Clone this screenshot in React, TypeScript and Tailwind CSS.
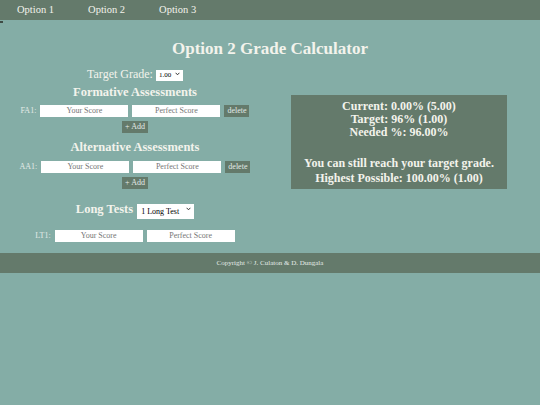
const serif = "font-['Liberation_Serif','Times_New_Roman',serif]";

function ScoreRow({ label, del }: { label: string; del?: boolean }) {
  return (
    <div className="flex h-[12px] items-center justify-center gap-[4px]">
      <span className="text-[8px] text-[#e3ebe7]">{label}</span>
      <input
        placeholder="Your Score"
        className="h-[12px] w-[88px] bg-white text-center text-[8px] text-black placeholder:text-[#757575] outline-none"
      />
      <input
        placeholder="Perfect Score"
        className="h-[12px] w-[88px] bg-white text-center text-[8px] text-black placeholder:text-[#757575] outline-none"
      />
      {del && (
        <button className="h-[12px] bg-[#647a6b] px-[3px] text-[8px] leading-[12px] text-[#e3ebe7]">
          delete
        </button>
      )}
    </div>
  );
}

function AddButton() {
  return (
    <div className="flex justify-center">
      <button className="h-[12px] bg-[#647a6b] px-[3px] text-[8px] leading-[12px] text-[#e3ebe7]">
        + Add
      </button>
    </div>
  );
}

function Chevron() {
  return (
    <svg width="5" height="4" viewBox="0 0 5 4" className="pointer-events-none absolute right-[3px] top-1/2 -translate-y-1/2">
      <path d="M0.6 0.8 L2.5 2.8 L4.4 0.8" fill="none" stroke="#222" strokeWidth="0.9" />
    </svg>
  );
}

export default function App() {
  return (
    <div className={`${serif} min-h-[405px] w-[540px] bg-[#84ada6] text-[#f3f3ec]`}>
      <nav className="flex h-[20px] items-center bg-[#647a6b] pl-[17px] text-[10.5px]">
        <span>Option 1</span>
        <span className="ml-[34px]">Option 2</span>
        <span className="ml-[34px]">Option 3</span>
      </nav>
      <div className="h-[3px]">
        <div className="mt-[1px] h-[2px] w-[3px] bg-[#3e4b44]" />
      </div>

      <h1 className="mt-[15px] text-center text-[17px] leading-[20px] font-bold">
        Option 2 Grade Calculator
      </h1>

      <div className="flex">
        <div className="w-[270px]">
          <div className="mt-[7px] flex items-center justify-center gap-[3px] text-[12px] leading-[14px]">
            <span>Target Grade:</span>
            <div className="relative">
              <select className="h-[11px] w-[27px] appearance-none bg-white pl-[3px] text-[7px] leading-[11px] text-black">
                <option>1.00</option>
              </select>
              <Chevron />
            </div>
          </div>

          <h2 className="mt-[4px] text-center text-[12.5px] leading-[14px] font-bold">
            Formative Assessments
          </h2>
          <div className="mt-[6px]">
            <ScoreRow label="FA1:" del />
          </div>
          <div className="mt-[4px]">
            <AddButton />
          </div>

          <h2 className="mt-[7px] text-center text-[12.5px] leading-[14px] font-bold">
            Alternative Assessments
          </h2>
          <div className="mt-[7px]">
            <ScoreRow label="AA1:" del />
          </div>
          <div className="mt-[4px]">
            <AddButton />
          </div>

          <div className="mt-[12px] flex h-[15px] items-center justify-center gap-[4px]">
            <span className="text-[12.5px] leading-[14px] font-bold">Long Tests</span>
            <div className="relative">
              <select className="h-[15px] w-[57px] appearance-none bg-white pl-[4px] text-[8px] leading-[15px] text-black">
                <option>1 Long Test</option>
              </select>
              <Chevron />
            </div>
          </div>
          <div className="mt-[14px]">
            <ScoreRow label="LT1:" />
          </div>
        </div>

        <div className="w-[270px] pl-[21px] pt-[36px]">
          <div className="flex h-[94px] w-[216px] flex-col items-center justify-center bg-[#647a6b] text-[12px] leading-[13px] font-bold">
            <p>Current: 0.00% (5.00)</p>
            <p>Target: 96% (1.00)</p>
            <p>Needed %: 96.00%</p>
            <p className="h-[16px]" />
            <p className="mt-[2px]">You can still reach your target grade.</p>
            <p className="mt-[2px]">Highest Possible: 100.00% (1.00)</p>
          </div>
        </div>
      </div>

      <footer className="mt-[11px] flex h-[20px] items-center justify-center bg-[#647a6b] text-[7px] text-[#e3ebe7]">
        Copyright © J. Culaton &amp; D. Dungala
      </footer>
    </div>
  );
}
